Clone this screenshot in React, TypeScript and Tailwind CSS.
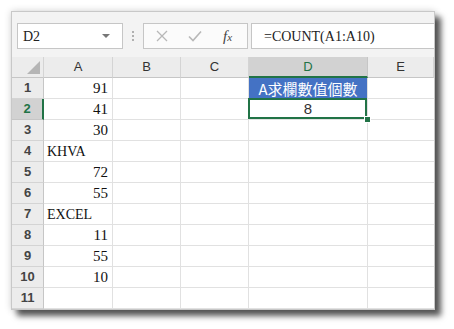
import React from "react";

const serif = { fontFamily: '"Liberation Serif", "Noto Sans CJK TC", serif' };
const sans = { fontFamily: '"Liberation Sans", "Noto Sans CJK TC", sans-serif' };

type Cell = { v?: string; align?: "l" | "r" };
const rows: Cell[] = [
  { v: "91", align: "r" },
  { v: "41", align: "r" },
  { v: "30", align: "r" },
  { v: "KHVA", align: "l" },
  { v: "72", align: "r" },
  { v: "55", align: "r" },
  { v: "EXCEL", align: "l" },
  { v: "11", align: "r" },
  { v: "55", align: "r" },
  { v: "10", align: "r" },
  {},
];

function ColHeader({ label, sel }: { label: string; sel?: boolean }) {
  return (
    <div
      className={
        "h-[21px] flex items-center justify-center text-[13px] border-r border-b " +
        (sel
          ? "bg-[#d2d2d2] text-[#217346] border-r-[#c6c6c6] border-b-2 border-b-[#217346]"
          : "bg-[#ececec] text-[#333] border-r-[#d4d4d4] border-b-[#c6c6c6]")
      }
      style={sans}
    >
      {label}
    </div>
  );
}

export default function App() {
  return (
    <div className="w-[454px] h-[329px] bg-white pt-[11px] pl-[11px]">
      <div className="w-[424px] border border-[#c8c8c8] bg-[#f3f3f3] shadow-[6px_6px_6px_rgba(0,0,0,0.65),0_0_7px_rgba(0,0,0,0.18)]">
        {/* toolbar */}
        <div className="h-[45px] flex items-start pt-[11px] pl-[5px]">
          <div className="w-[106px] h-[26px] bg-white border border-[#c6c6c6] flex items-center justify-between pl-[5px] pr-[12px]">
            <span className="text-[14px] text-[#222]" style={serif}>D2</span>
            <svg width="8" height="5" viewBox="0 0 8 5">
              <path d="M0 0 L8 0 L4 4 Z" fill="#777" />
            </svg>
          </div>
          <div className="w-[20px] h-[26px] flex flex-col items-center justify-center gap-[2px]">
            <span className="w-[2px] h-[2px] bg-[#b0b0b0]" />
            <span className="w-[2px] h-[2px] bg-[#b0b0b0]" />
            <span className="w-[2px] h-[2px] bg-[#b0b0b0]" />
          </div>
          <div className="w-[105px] h-[26px] bg-[#fbfbfb] border border-[#c6c6c6] flex items-center pl-[12px] gap-[20px]">
            <svg width="12" height="12" viewBox="0 0 12 12">
              <path d="M1 1 L11 11 M11 1 L1 11" stroke="#b8b8b8" strokeWidth="1.3" />
            </svg>
            <svg width="14" height="12" viewBox="0 0 14 12">
              <path d="M1 6.5 L5 10.5 L13 1.5" stroke="#b8b8b8" strokeWidth="1.6" fill="none" />
            </svg>
            <span className="text-[15px] italic text-[#444] ml-[1px]" style={serif}>
              f<span className="text-[11px]">x</span>
            </span>
          </div>
          <div className="ml-[3px] flex-1 h-[26px] bg-white border border-[#c6c6c6] border-r-0 flex items-center pl-[12px]">
            <span className="text-[14px] text-[#222]" style={serif}>=COUNT(A1:A10)</span>
          </div>
        </div>
        {/* grid */}
        <div className="grid grid-cols-[32px_69px_68px_68px_119px_66px] bg-white">
          <div className="h-[21px] bg-[#ececec] border-r border-b border-r-[#d4d4d4] border-b-[#c6c6c6] flex items-end justify-end pr-[3px] pb-[3px]">
            <svg width="13" height="13" viewBox="0 0 13 13">
              <path d="M13 0 L13 13 L0 13 Z" fill="#b5b5b5" />
            </svg>
          </div>
          <ColHeader label="A" />
          <ColHeader label="B" />
          <ColHeader label="C" />
          <ColHeader label="D" sel />
          <ColHeader label="E" />
          {rows.map((r, i) => {
            const n = i + 1;
            const sel = n === 2;
            return (
              <React.Fragment key={n}>
                <div
                  className={
                    "h-[21px] flex items-center justify-center text-[13px] font-bold border-b border-r " +
                    (sel
                      ? "bg-[#d2d2d2] text-[#217346] border-b-[#c6c6c6] border-r-2 border-r-[#217346]"
                      : "bg-[#ececec] text-[#444] border-b-[#d4d4d4] border-r-[#c6c6c6]")
                  }
                  style={sans}
                >
                  {n}
                </div>
                <div
                  className={
                    "h-[21px] border-r border-b border-[#e1e1e1] flex items-center text-[#111] " +
                    (r.align === "r" ? "justify-end pr-[4px] text-[15px]" : "justify-start pl-[3px] text-[14px]")
                  }
                  style={serif}
                >
                  {r.v}
                </div>
                <div className="h-[21px] border-r border-b border-[#e1e1e1]" />
                <div className="h-[21px] border-r border-b border-[#e1e1e1]" />
                {n === 1 ? (
                  <div
                    className="h-[21px] border-r border-b border-[#e1e1e1] bg-[#4472c4] text-white text-[15px] flex items-center justify-center leading-none"
                    style={{ fontFamily: '"Noto Sans CJK TC", sans-serif' }}
                  >
                    A求欄數值個數
                  </div>
                ) : n === 2 ? (
                  <div className="relative h-[21px] border-r border-b border-[#e1e1e1] flex items-center justify-center text-[15px] text-[#333]" style={sans}>
                    8
                    <div className="absolute left-[-1px] top-[-1px] w-[calc(100%+1px)] h-[calc(100%+1px)] border-2 border-[#217346]" />
                    <div className="absolute right-[-4px] bottom-[-4px] w-[7px] h-[7px] bg-[#217346] border border-white" />
                  </div>
                ) : (
                  <div className="h-[21px] border-r border-b border-[#e1e1e1]" />
                )}
                <div className="h-[21px] border-b border-[#e1e1e1]" />
              </React.Fragment>
            );
          })}
        </div>
      </div>
    </div>
  );
}
